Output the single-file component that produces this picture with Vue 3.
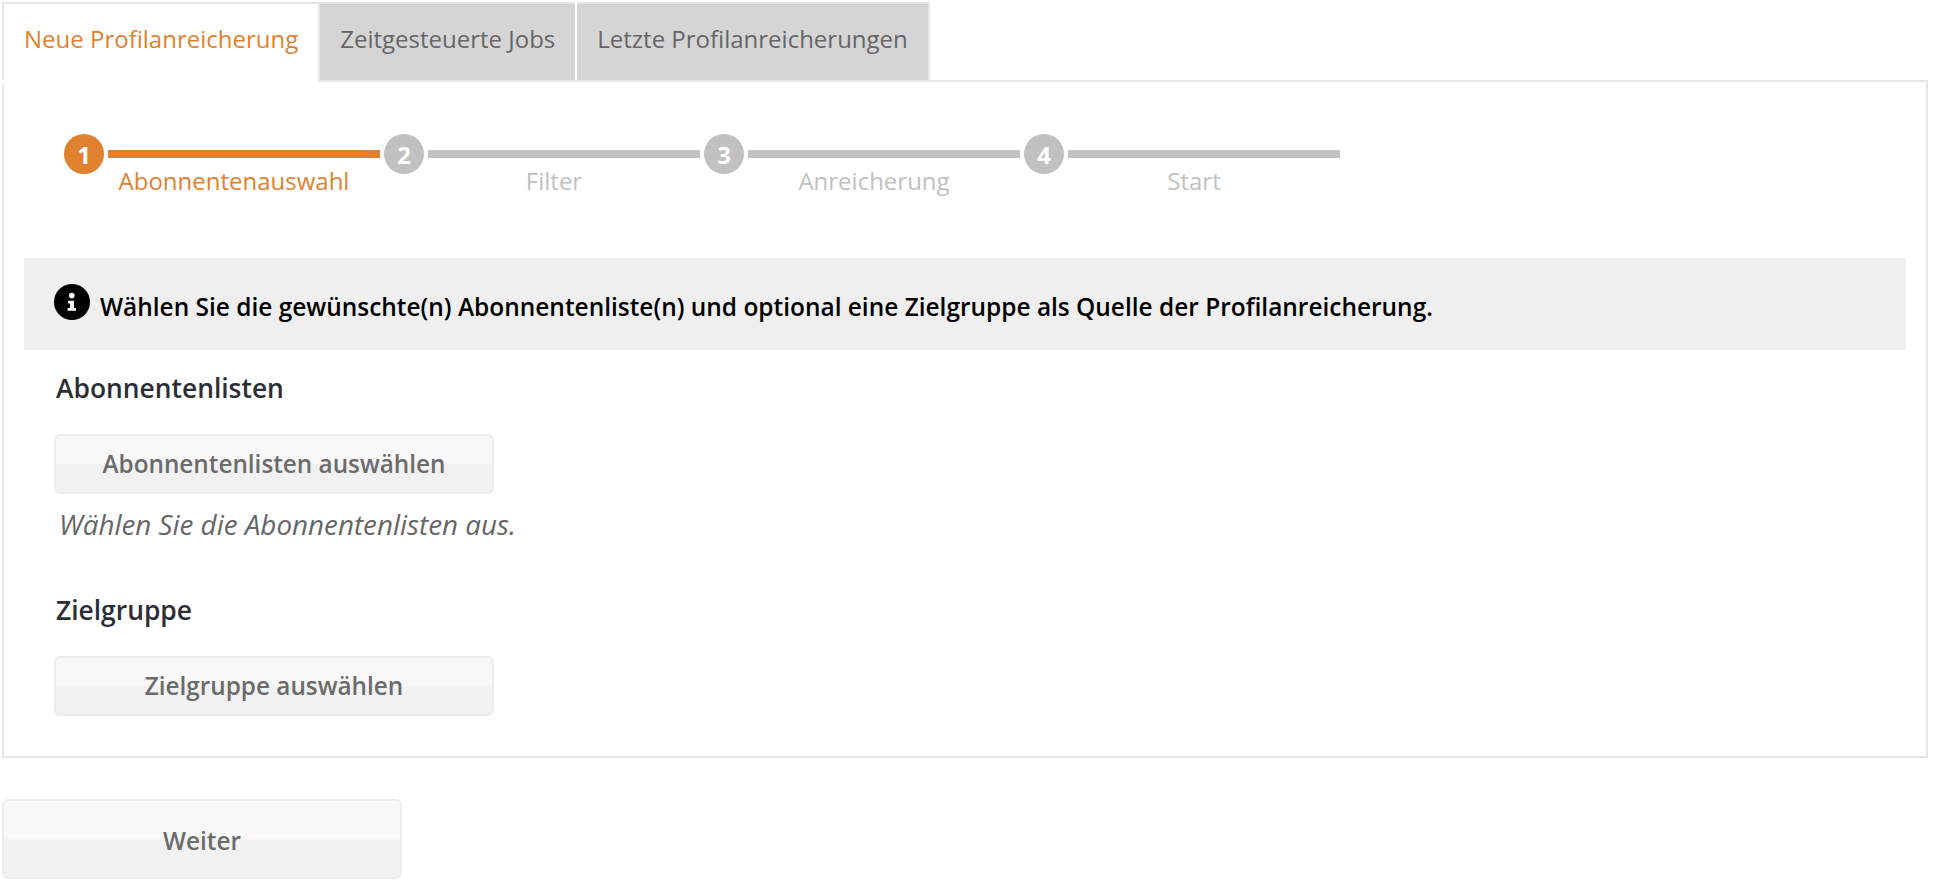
<script setup>
const tabs = ['Neue Profilanreicherung', 'Zeitgesteuerte Jobs', 'Letzte Profilanreicherungen']
const steps = ['Abonnentenauswahl', 'Filter', 'Anreicherung', 'Start']
</script>

<template>
  <div class="page">
    <div class="tabs">
      <div v-for="(t, i) in tabs" :key="t" class="tab" :class="{ active: i === 0, last: i === 2 }">{{ t }}</div>
    </div>
    <div class="panel">
      <div class="steps">
        <div v-for="(s, i) in steps" :key="s" class="step" :class="{ on: i === 0 }">
          <div class="circle">{{ i + 1 }}</div>
          <div class="track">
            <div class="line"></div>
            <div class="label">{{ s }}</div>
          </div>
        </div>
      </div>
      <div class="info">
        <svg class="icon" viewBox="0 0 36 36">
          <circle cx="18" cy="18" r="18" fill="#000" />
          <circle cx="17.8" cy="11.6" r="2.8" fill="#fff" />
          <path d="M14 16.7h6v7.3h2v2.7H13.6V24h2.4v-4.6h-2z" fill="#fff" />
        </svg>
        <span class="info-text">Wählen Sie die gewünschte(n) Abonnentenliste(n) und optional eine Zielgruppe als Quelle der Profilanreicherung.</span>
      </div>
      <h3 class="head first">Abonnentenlisten</h3>
      <button class="btn small">Abonnentenlisten auswählen</button>
      <p class="hint">Wählen Sie die Abonnentenlisten aus.</p>
      <h3 class="head second">Zielgruppe</h3>
      <button class="btn small">Zielgruppe auswählen</button>
    </div>
    <button class="btn next">Weiter</button>
  </div>
</template>

<style scoped>
.page {
  box-sizing: border-box;
  width: 1934px;
  height: 882px;
  padding: 2px 6px 0 2px;
  font-family: "Open Sans", "Liberation Sans", sans-serif;
  background: #fff;
  overflow: hidden;
}
.tabs {
  display: flex;
  height: 78px;
  position: relative;
  z-index: 1;
}
.tab {
  box-sizing: border-box;
  height: 78px;
  padding: 0 20px 8px;
  margin-right: 2px;
  display: flex;
  align-items: center;
  background: #d5d5d5;
  color: #666;
  font-size: 24px;
  border-top: 2px solid #e6e6e6;
}
.tab.active {
  position: relative;
  background: #fff;
  color: #e08130;
  border-left: 2px solid #e6e6e6;
  border-right: 2px solid #e6e6e6;
  padding: 0 20px 8px 20px;
  margin-right: 0;
}
.tab.active::after {
  content: "";
  position: absolute;
  left: -2px;
  right: 0;
  top: 76px;
  height: 4px;
  background: #fff;
}
.tab.last {
  border-right: 2px solid #e6e6e6;
  margin-right: 0;
}
.panel {
  box-sizing: border-box;
  border: 2px solid #e6e6e6;
  height: 678px;
  padding: 0 20px;
}
.steps {
  display: flex;
  padding: 52px 0 0 40px;
  height: 176px;
  box-sizing: border-box;
}
.step {
  display: flex;
  width: 320px;
  flex: none;
}
.circle {
  width: 40px;
  height: 40px;
  border-radius: 50%;
  background: #c1c1c1;
  color: #fff;
  font-weight: 700;
  font-size: 24px;
  display: flex;
  align-items: center;
  justify-content: center;
  flex: none;
}
.track {
  margin-left: 4px;
  width: 272px;
  padding-top: 16px;
}
.line {
  height: 8px;
  background: #c1c1c1;
}
.label {
  text-align: center;
  color: #c1c1c1;
  font-size: 24px;
  line-height: 34px;
  margin-top: 6px;
  padding-right: 20px;
}
.on .circle, .on .line { background: #e08130; }
.on .label { color: #e08130; }
.info {
  box-sizing: border-box;
  height: 92px;
  background: #efefef;
  display: flex;
  align-items: center;
  padding-left: 30px;
  color: #000;
  font-size: 24.45px;
  font-weight: 600;
}
.info-text { padding-top: 4px; }
.icon {
  width: 36px;
  height: 36px;
  flex: none;
  margin: -4px 10px 0 0;
}
.head {
  margin: 0;
  font-size: 26.4px;
  font-weight: 600;
  color: #2c2e35;
  line-height: 36px;
  padding-left: 32px;
}
.first { margin-top: 20px; }
.second { margin-top: 50px; }
.btn {
  display: block;
  box-sizing: border-box;
  border: 2px solid #ededed;
  border-radius: 6px;
  background: linear-gradient(#f8f8f8 47%, #f1f1f1 53%);
  color: #6b6b6b;
  font-family: inherit;
  font-size: 24.3px;
  font-weight: 600;
  padding: 0;
}
.small {
  width: 440px;
  height: 60px;
  margin: 28px 0 0 30px;
  padding-bottom: 2px;
}
.hint {
  margin: 12px 0 0 35px;
  font-style: italic;
  font-size: 27.8px;
  line-height: 36px;
  color: #666;
}
.next {
  width: 400px;
  height: 80px;
  margin-top: 41px;
  padding-top: 3px;
}
</style>
